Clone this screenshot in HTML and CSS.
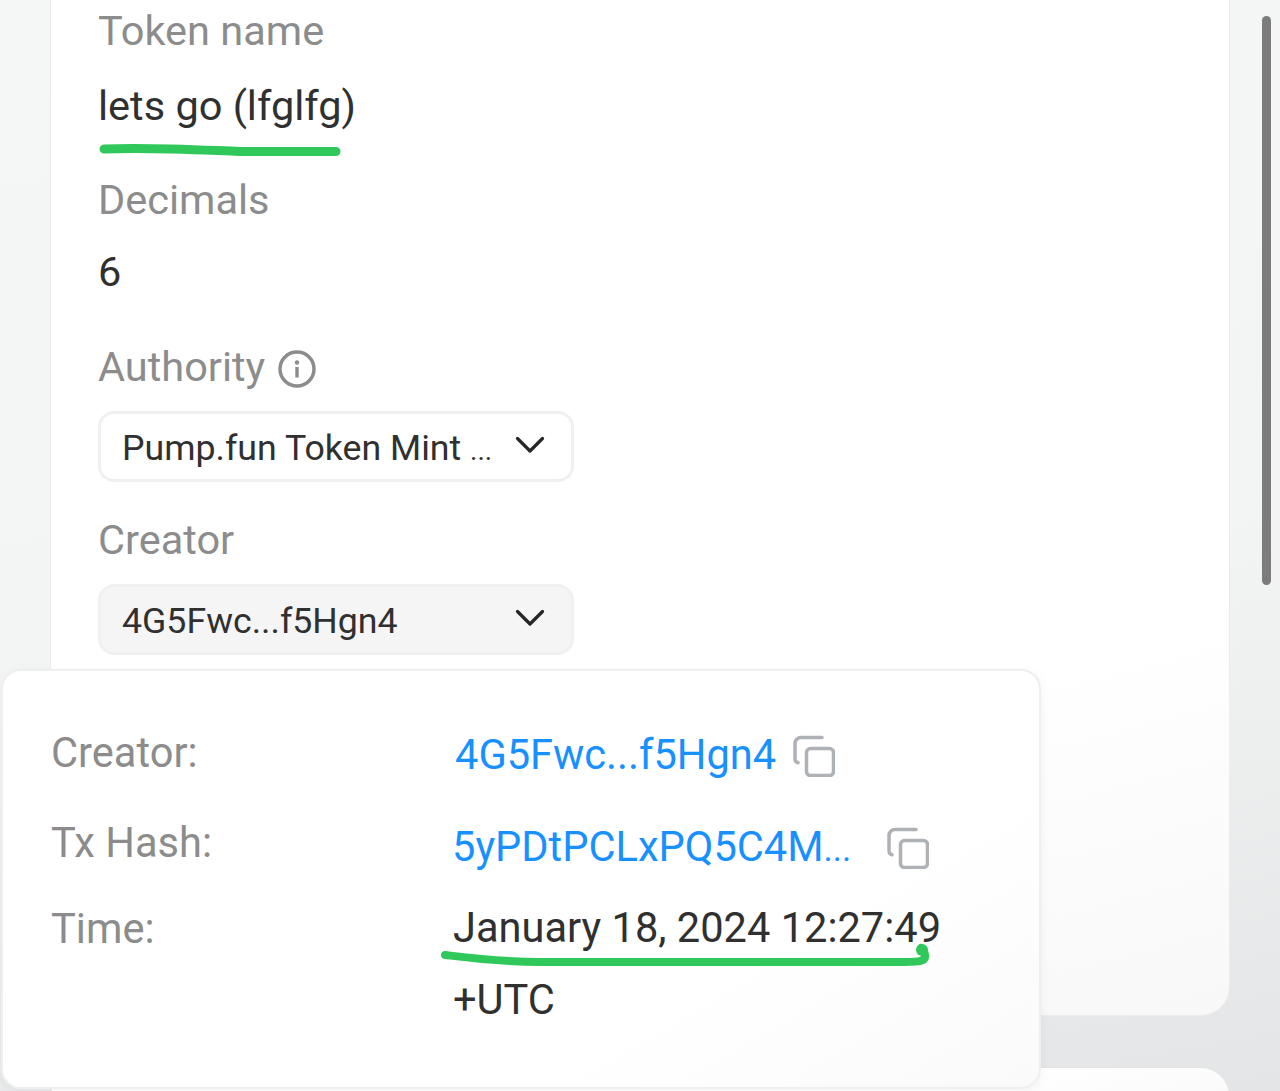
FILE: index.html
```html
<!DOCTYPE html>
<html lang="en">
<head>
<meta charset="utf-8">
<title>Token details</title>
<link rel="stylesheet" href="styles.css">
</head>
<body>
<div class="page">
  <main class="card">
    <div class="label first">Token name</div>
    <div class="value name">lets go (lfglfg)</div>
    <div class="label decimals">Decimals</div>
    <div class="value six">6</div>
    <div class="label authority">Authority
      <svg class="info" viewBox="0 0 38 38" aria-hidden="true"><circle cx="19" cy="19" r="17" fill="none" stroke="#8c8c8c" stroke-width="3.500"/><circle cx="19" cy="12.500" r="2.200" fill="#8c8c8c"/><rect x="17.300" y="17" width="3.400" height="10.500" fill="#8c8c8c"/></svg>
    </div>
    <div class="select">
      <span>Pump.fun Token Mint <span class="dots">...</span></span>
      <svg class="chev" viewBox="0 0 30 20" aria-hidden="true"><path d="M2.500 3.500 15 16 27.500 3.500" fill="none" stroke="#262626" stroke-width="3.200" stroke-linecap="round" stroke-linejoin="round"/></svg>
    </div>
    <div class="label creator">Creator</div>
    <div class="select grey">
      <span>4G5Fwc...f5Hgn4</span>
      <svg class="chev" viewBox="0 0 30 20" aria-hidden="true"><path d="M2.500 3.500 15 16 27.500 3.500" fill="none" stroke="#262626" stroke-width="3.200" stroke-linecap="round" stroke-linejoin="round"/></svg>
    </div>
  </main>
  <div class="card next"></div>

  <div class="scrollbar"></div>

  <section class="popup">
    <div class="key">Creator:</div>
    <div class="row-val r1"><a class="link">4G5Fwc...f5Hgn4</a>
      <svg class="copy" viewBox="0 0 42 42" aria-hidden="true"><path d="M29 2.500H8a6 6 0 0 0-6 6V24a4 4 0 0 0 3 3.800" fill="none" stroke="#aeb1b6" stroke-width="3.500" stroke-linecap="round"/><rect x="13.500" y="13.500" width="27" height="27" rx="4" fill="none" stroke="#aeb1b6" stroke-width="3.500"/></svg>
    </div>
    <div class="key">Tx Hash:</div>
    <div class="row-val r2"><a class="link">5yPDtPCLxPQ5C4M<span class="link-dots">...</span></a>
      <svg class="copy" viewBox="0 0 42 42" aria-hidden="true"><path d="M29 2.500H8a6 6 0 0 0-6 6V24a4 4 0 0 0 3 3.800" fill="none" stroke="#aeb1b6" stroke-width="3.500" stroke-linecap="round"/><rect x="13.500" y="13.500" width="27" height="27" rx="4" fill="none" stroke="#aeb1b6" stroke-width="3.500"/></svg>
    </div>
    <div class="key">Time:</div>
    <div class="row-val r3">January 18, 2024 12:27:49<br>+UTC</div>
  </section>

  <svg class="ink" viewBox="0 0 1280 1091" aria-hidden="true">
    <path d="M104 149C150 147 200 150 240 151.500H336" fill="none" stroke="#30c85a" stroke-width="9" stroke-linecap="round"/>
    <path d="M445 955C470 958 500 962 540 962H905C920 962 926 961 925 955C925 951 922 949 921 948" fill="none" stroke="#30c85a" stroke-width="8" stroke-linecap="round"/>
    <circle cx="922" cy="950" r="6" fill="#30c85a"/>
  </svg>
</div>
</body>
</html>
```

FILE: styles.css
```css
* { box-sizing: border-box; }
html, body { margin: 0; padding: 0; }
body { font-family: Roboto, "Liberation Sans", sans-serif; }

.page {
  position: relative;
  width: 1280px;
  height: 1091px;
  overflow: hidden;
  background: linear-gradient(170deg, #f5f6f6 0%, #f3f4f4 55%, #e4e5e6 100%);
  display: flex;
  flex-direction: column;
  padding-left: 50px;
}

.card {
  width: 1180px;
  height: 1017px;
  flex: none;
  margin-top: -1px;
  padding: 0 0 0 47px;
  background: linear-gradient(165deg, #fff 70%, #f8f8f8 100%);
  border: 1px solid #ebecec;
  border-top: 0;
  border-radius: 0 0 29px 29px;
  display: flex;
  flex-direction: column;
  align-items: flex-start;
}
.card.next {
  height: 60px;
  margin-top: 51px;
  border-radius: 29px 29px 0 0;
  border: 1px solid #e2e3e4;
}

.label { font-size: 41.500px; line-height: 48px; color: #8c8c8c; }
.value { font-size: 41.500px; line-height: 48px; color: #303030; }
.first { margin-top: 8px; }
.name { margin-top: 27px; }
.decimals { margin-top: 46px; }
.six { margin-top: 24px; }
.authority { margin-top: 47px; display: flex; align-items: center; gap: 13px; }
.info { width: 38px; height: 38px; margin-top: 3px; }

.select {
  width: 476px;
  height: 71px;
  margin-top: 20px;
  padding: 2px 26px 0 21px;
  border: 3px solid #f0f0f0;
  border-radius: 16px;
  display: flex;
  align-items: center;
  justify-content: space-between;
  font-size: 35.700px;
  color: #303030;
  background: #fff;
}
.select.grey { background: #f5f5f5; }
.dots { font-size: 28px; }
.chev { width: 30px; height: 20px; margin-bottom: 5px; }
.creator { margin-top: 34px; }

.popup {
  position: absolute;
  left: 1px;
  top: 669px;
  width: 1040px;
  height: 420px;
  padding: 58px 0 0 48px;
  background: linear-gradient(150deg, #fff 70%, #fafafa 100%);
  border: 2px solid #eeefef;
  border-radius: 20px;
  box-shadow: 0 3px 12px rgba(0, 0, 0, .05);
  display: grid;
  grid-template-columns: 402px 1fr;
  grid-template-rows: 90px 86px auto;
  font-size: 41.600px;
  line-height: 48px;
}
.key { color: #8c8c8c; }
.row-val { color: #303030; display: flex; align-items: flex-start; }
.r1 { gap: 17px; margin-top: 2px; margin-left: 2px; }
.r2 { gap: 36px; margin-top: 4px; margin-left: -1px; }
.r3 { display: block; line-height: 72px; margin-top: -13px; }
.link { color: #1890ff; }
.link-dots { font-size: 35px; }
.copy { width: 42px; height: 42px; margin-top: 4px; flex: none; }

.scrollbar {
  position: absolute;
  left: 1262px;
  top: 16px;
  width: 9px;
  height: 569px;
  border-radius: 5px;
  background: #7c7c7c;
}
.ink { position: absolute; inset: 0; width: 1280px; height: 1091px; pointer-events: none; }
```
